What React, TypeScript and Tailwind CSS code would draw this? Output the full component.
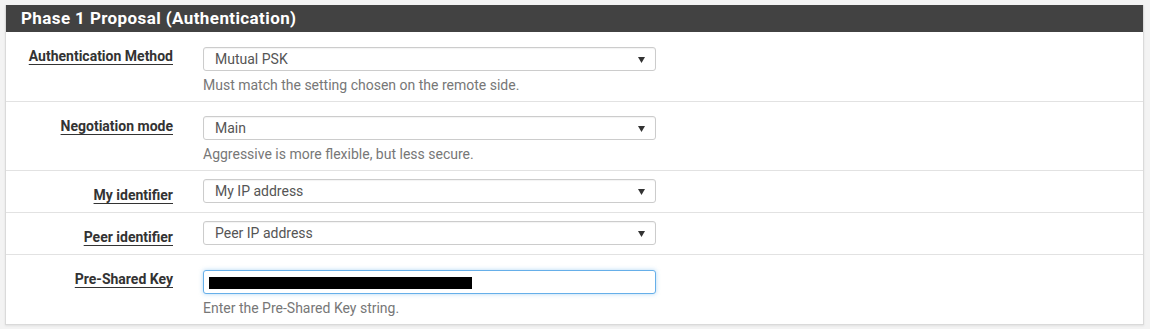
import React from "react";

const font = { fontFamily: "Roboto, 'Liberation Sans', sans-serif" };

function Arrow() {
  return (
    <svg width="7" height="6" viewBox="0 0 7 6" className="absolute right-[10px] top-[9px]">
      <path d="M0 0 H7 L3.5 6 Z" fill="#333" />
    </svg>
  );
}

function SelectBox({ value }: { value: string }) {
  return (
    <div className="relative h-[24px] w-[453px] rounded-[3px] border border-[#cccccc] bg-white pl-[11px] text-[14px] leading-[22px] text-[#555] shadow-[inset_0_1px_1px_rgba(0,0,0,0.05)]">
      {value}
      <Arrow />
    </div>
  );
}

function Row({
  label,
  children,
  help,
  last,
  tight,
}: {
  label: string;
  children: React.ReactNode;
  help?: string;
  last?: boolean;
  tight?: boolean;
}) {
  const pad = help
    ? tight
      ? "pt-[14px] pb-[7px]"
      : "pt-[15px] pb-[7px]"
    : "pt-[8px] pb-[9px]";
  return (
    <div className={`flex items-start ${last ? "" : "border-b border-[#e2e2e2]"} ${pad}`}>
      <div
        className={`w-[167px] shrink-0 text-right text-[14px] font-bold leading-[15px] text-[#333] ${
          help ? (tight ? "pt-[3px]" : "pt-[2px]") : "pt-[9px]"
        }`}
      >
        <span className="underline decoration-1 underline-offset-[3px]">{label}</span>
      </div>
      <div className="ml-[30px]">
        {children}
        {help && (
          <div className="mt-[5px] text-[14px] leading-[18px] text-[#777]">{help}</div>
        )}
      </div>
    </div>
  );
}

export default function App() {
  return (
    <div className="h-[329px] w-[1150px] bg-[#f3f3f3] pl-[5px] pt-[5px]" style={font}>
      <div className="w-[1139px] border-x border-b border-[#dadada] bg-white shadow-[0_1px_2px_rgba(0,0,0,0.08)]">
        <div className="h-[27px] bg-[#424242] pl-[15px] text-[17px] font-bold leading-[27px] tracking-[0.4px] text-white">
          Phase 1 Proposal (Authentication)
        </div>
        <Row label="Authentication Method" help="Must match the setting chosen on the remote side.">
          <SelectBox value="Mutual PSK" />
        </Row>
        <Row label="Negotiation mode" help="Aggressive is more flexible, but less secure." tight>
          <SelectBox value="Main" />
        </Row>
        <Row label="My identifier">
          <SelectBox value="My IP address" />
        </Row>
        <Row label="Peer identifier">
          <SelectBox value="Peer IP address" />
        </Row>
        <Row label="Pre-Shared Key" help="Enter the Pre-Shared Key string." last>
          <div className="relative h-[24px] w-[453px] overflow-hidden rounded-[3px] border border-[#66afe9] bg-white shadow-[0_0_4px_rgba(102,175,233,0.5)]">
            <div className="absolute left-[5px] top-[6px] h-[12px] w-[263px] bg-black" />
          </div>
        </Row>
      </div>
    </div>
  );
}
